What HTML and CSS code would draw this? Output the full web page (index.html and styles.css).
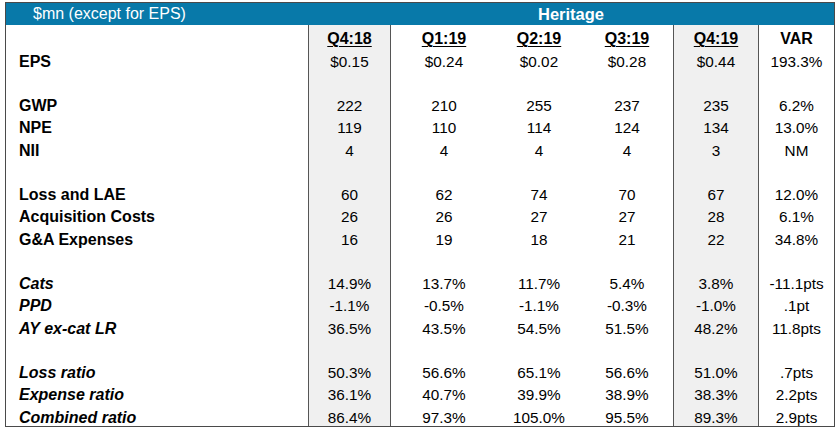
FILE: index.html
```html
<!DOCTYPE html>
<html>
<head>
<meta charset="utf-8">
<link rel="stylesheet" href="styles.css">
</head>
<body>
<div class="table">
  <div class="title">
    <div class="title-label">$mn (except for EPS)</div>
    <div class="title-group">Heritage</div>
  </div>
  <div class="row head">
    <div class="lbl"></div>
    <div class="c hl"><u>Q4:18</u></div>
    <div class="c"><u>Q1:19</u></div>
    <div class="c"><u>Q2:19</u></div>
    <div class="c"><u>Q3:19</u></div>
    <div class="c hl"><u>Q4:19</u></div>
    <div class="c">VAR</div>
  </div>
  <div class="row">
    <div class="lbl">EPS</div>
    <div class="c hl">$0.15</div><div class="c">$0.24</div><div class="c">$0.02</div><div class="c">$0.28</div><div class="c hl">$0.44</div><div class="c">193.3%</div>
  </div>
  <div class="row">
    <div class="lbl"></div><div class="c hl"></div><div class="c"></div><div class="c"></div><div class="c"></div><div class="c hl"></div><div class="c"></div>
  </div>
  <div class="row">
    <div class="lbl">GWP</div>
    <div class="c hl">222</div><div class="c">210</div><div class="c">255</div><div class="c">237</div><div class="c hl">235</div><div class="c">6.2%</div>
  </div>
  <div class="row">
    <div class="lbl">NPE</div>
    <div class="c hl">119</div><div class="c">110</div><div class="c">114</div><div class="c">124</div><div class="c hl">134</div><div class="c">13.0%</div>
  </div>
  <div class="row">
    <div class="lbl">NII</div>
    <div class="c hl">4</div><div class="c">4</div><div class="c">4</div><div class="c">4</div><div class="c hl">3</div><div class="c">NM</div>
  </div>
  <div class="row">
    <div class="lbl"></div><div class="c hl"></div><div class="c"></div><div class="c"></div><div class="c"></div><div class="c hl"></div><div class="c"></div>
  </div>
  <div class="row">
    <div class="lbl">Loss and LAE</div>
    <div class="c hl">60</div><div class="c">62</div><div class="c">74</div><div class="c">70</div><div class="c hl">67</div><div class="c">12.0%</div>
  </div>
  <div class="row">
    <div class="lbl">Acquisition Costs</div>
    <div class="c hl">26</div><div class="c">26</div><div class="c">27</div><div class="c">27</div><div class="c hl">28</div><div class="c">6.1%</div>
  </div>
  <div class="row">
    <div class="lbl">G&amp;A Expenses</div>
    <div class="c hl">16</div><div class="c">19</div><div class="c">18</div><div class="c">21</div><div class="c hl">22</div><div class="c">34.8%</div>
  </div>
  <div class="row">
    <div class="lbl"></div><div class="c hl"></div><div class="c"></div><div class="c"></div><div class="c"></div><div class="c hl"></div><div class="c"></div>
  </div>
  <div class="row">
    <div class="lbl it">Cats</div>
    <div class="c hl">14.9%</div><div class="c">13.7%</div><div class="c">11.7%</div><div class="c">5.4%</div><div class="c hl">3.8%</div><div class="c">-11.1pts</div>
  </div>
  <div class="row">
    <div class="lbl it">PPD</div>
    <div class="c hl">-1.1%</div><div class="c">-0.5%</div><div class="c">-1.1%</div><div class="c">-0.3%</div><div class="c hl">-1.0%</div><div class="c">.1pt</div>
  </div>
  <div class="row">
    <div class="lbl it">AY ex-cat LR</div>
    <div class="c hl">36.5%</div><div class="c">43.5%</div><div class="c">54.5%</div><div class="c">51.5%</div><div class="c hl">48.2%</div><div class="c">11.8pts</div>
  </div>
  <div class="row">
    <div class="lbl"></div><div class="c hl"></div><div class="c"></div><div class="c"></div><div class="c"></div><div class="c hl"></div><div class="c"></div>
  </div>
  <div class="row">
    <div class="lbl it">Loss ratio</div>
    <div class="c hl">50.3%</div><div class="c">56.6%</div><div class="c">65.1%</div><div class="c">56.6%</div><div class="c hl">51.0%</div><div class="c">.7pts</div>
  </div>
  <div class="row">
    <div class="lbl it">Expense ratio</div>
    <div class="c hl">36.1%</div><div class="c">40.7%</div><div class="c">39.9%</div><div class="c">38.9%</div><div class="c hl">38.3%</div><div class="c">2.2pts</div>
  </div>
  <div class="row">
    <div class="lbl it">Combined ratio</div>
    <div class="c hl">86.4%</div><div class="c">97.3%</div><div class="c">105.0%</div><div class="c">95.5%</div><div class="c hl">89.3%</div><div class="c">2.9pts</div>
  </div>
</div>
</body>
</html>
```
FILE: styles.css
```css
html, body {
  margin: 0;
  padding: 0;
  background: #ffffff;
}
body {
  padding: 2px 0 0 5px;
  font-family: "Liberation Sans", Arial, sans-serif;
  color: #000;
}
.table {
  width: 830px;
  box-sizing: border-box;
  border: 1px solid #4a4a4a;
}
.title {
  display: grid;
  grid-template-columns: 302px 526px;
  height: 22px;
  background: #0879a9;
  color: #fff;
  align-items: center;
}
.title-label {
  font-size: 16px;
  padding-left: 27px;
}
.title-group {
  font-size: 16.5px;
  font-weight: bold;
  text-align: center;
}
.row {
  display: grid;
  grid-template-columns: 302px 83px 106px 84px 92px 86px 75px;
  height: 22.25px;
}
.lbl, .c {
  display: flex;
  align-items: flex-end;
  line-height: 17px;
  padding-bottom: 0;
  box-sizing: border-box;
}
.lbl {
  font-weight: bold;
  font-size: 16px;
  padding-left: 13px;
}
.lbl.it {
  font-style: italic;
}
.c {
  justify-content: center;
  font-size: 15.3px;
}
.head .c {
  font-weight: bold;
  font-size: 16px;
}
.head u {
  text-decoration-thickness: 1px;
  text-underline-offset: 2px;
}
.hl {
  background: #f0f0f0;
  border-left: 1px solid #555;
  border-right: 1px solid #555;
}
```
